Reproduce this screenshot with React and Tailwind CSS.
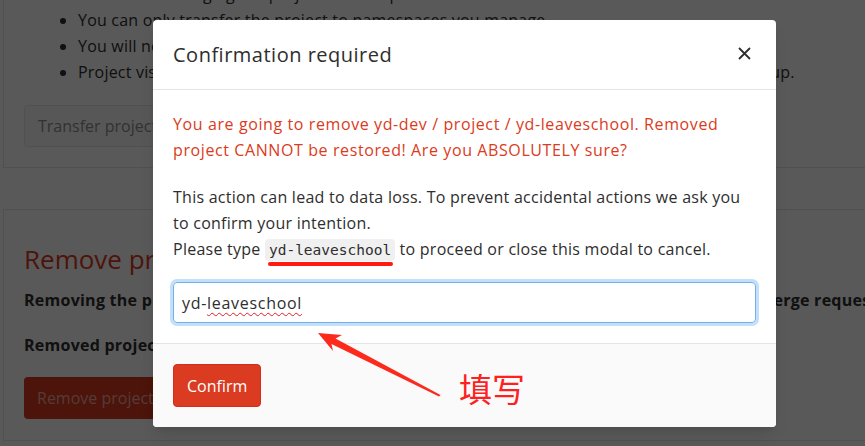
const font = { fontFamily: '"Open Sans", "Noto Sans", sans-serif' };

function BackgroundPage() {
  return (
    <div className="absolute inset-0 bg-white text-[#2e2e2e]">
      <section className="ml-[3px] w-[1000px] border border-t-0 border-[#e5e5e5] bg-white pb-5">
        <ul className="-mt-[19px] list-disc pl-[74px] text-[16px] leading-[26px] tracking-[0.2px]">
          <li>Be careful. Changing the project's namespace can have unintended side effects.</li>
          <li>You can only transfer the project to namespaces you manage.</li>
          <li>You will need to update your local repositories to point to the new location.</li>
          <li>Project visibility level will be changed to match namespace rules when transferring to a group.</li>
        </ul>
        <button className="ml-[20px] mt-[20px] h-[42px] rounded-[4px] border border-[#e5e5e5] bg-[#fafafa] px-[13px] text-[16px] text-[#909090]">
          Transfer project
        </button>
      </section>

      <section className="ml-[3px] mt-[41px] w-[1000px] border border-[#e5e5e5] bg-white px-[20px] pb-[21px] pt-[30px]">
        <h2 className="text-[26px] leading-[38px] text-[#db3b21]">Remove project</h2>
        <p className="mt-[9px] text-[16px] font-bold leading-[26px] tracking-[0.25px]">
          Removing the project will delete its repository and all related resources including issues, merge requests etc.
        </p>
        <p className="mt-[19px] text-[16px] font-bold leading-[26px] tracking-[0.25px]">
          Removed project CANNOT be restored!
        </p>
        <button className="mt-[19px] h-[42px] rounded-[4px] bg-[#db3b21] px-[13px] text-[16px] text-[#f2a89c]">
          Remove project
        </button>
      </section>
    </div>
  );
}

function Annotation() {
  return (
    <>
      <svg className="pointer-events-none absolute inset-0" width="865" height="446">
        <line x1="270" y1="264" x2="391" y2="264" stroke="#ff1a12" strokeWidth="4" strokeLinecap="round" />
        <polygon
          fill="#fb2a1d"
          points="318,333 342,335 335.5,338.5 440.5,395 439,396.5 331.5,344 333,351"
        />
      </svg>
      <span
        className="pointer-events-none absolute left-[459px] top-[366px] text-[33px] leading-[44px] text-[#ff2020]"
        style={{ fontFamily: '"Noto Sans CJK SC", sans-serif' }}
      >
        填写
      </span>
    </>
  );
}

export default function App() {
  return (
    <div className="relative h-[446px] w-[865px] overflow-hidden" style={font}>
      <BackgroundPage />
      <div className="absolute inset-0 bg-black/65" />

      <div className="absolute left-[153px] top-[20px] w-[623px] overflow-hidden rounded-[4px] bg-white text-[#2e2e2e] shadow-lg">
        <div className="flex h-[70px] items-center justify-between border-b border-[#e5e5e5] px-[20px] pt-[1px]">
          <h3 className="text-[20px] font-normal tracking-[0.5px]">Confirmation required</h3>
          <svg width="13" height="13" viewBox="0 0 13 13" className="mr-[5px] -mt-[3px]">
            <path d="M1 1 L12 12 M12 1 L1 12" stroke="#2e2e2e" strokeWidth="1.8" />
          </svg>
        </div>

        <div className="px-[20px] pb-[20px] pt-[21px] text-[16px] leading-[26px]">
          <p className="tracking-[0.6px] text-[#db3b21]">
            You are going to remove yd-dev / project / yd-leaveschool. Removed
            <br />
            project CANNOT be restored! Are you ABSOLUTELY sure?
          </p>
          <p className="mt-[21px] tracking-[0.25px]">
            This action can lead to data loss. To prevent accidental actions we ask you
            <br />
            to confirm your intention.
            <br />
            Please type{" "}
            <code
              className="rounded-[4px] bg-[#f0f0f0] px-[4px] py-[3px] text-[14.5px] tracking-normal text-[#2e2e2e]"
              style={{ fontFamily: '"DejaVu Sans Mono", "Liberation Mono", monospace' }}
            >
              yd-leaveschool
            </code>{" "}
            to proceed or close this modal to cancel.
          </p>
          <div className="mt-[19px] flex h-[41px] items-center rounded-[4px] border border-[#73afea] px-[8px] text-[16px] tracking-[0.7px] shadow-[0_0_0_3px_#c3e0fb]">
            <span>
              yd-
              <span className="underline decoration-[#e02020] decoration-wavy decoration-1 underline-offset-[3px]">
                leaveschool
              </span>
            </span>
          </div>
        </div>

        <div className="border-t border-[#e5e5e5] bg-[#fafafa] px-[20px] pb-[20px] pt-[20px]">
          <button className="h-[43px] rounded-[4px] border border-[#d22d1e] bg-[#db3b21] px-[13px] text-[16px] text-white">
            Confirm
          </button>
        </div>
      </div>

      <Annotation />
    </div>
  );
}
